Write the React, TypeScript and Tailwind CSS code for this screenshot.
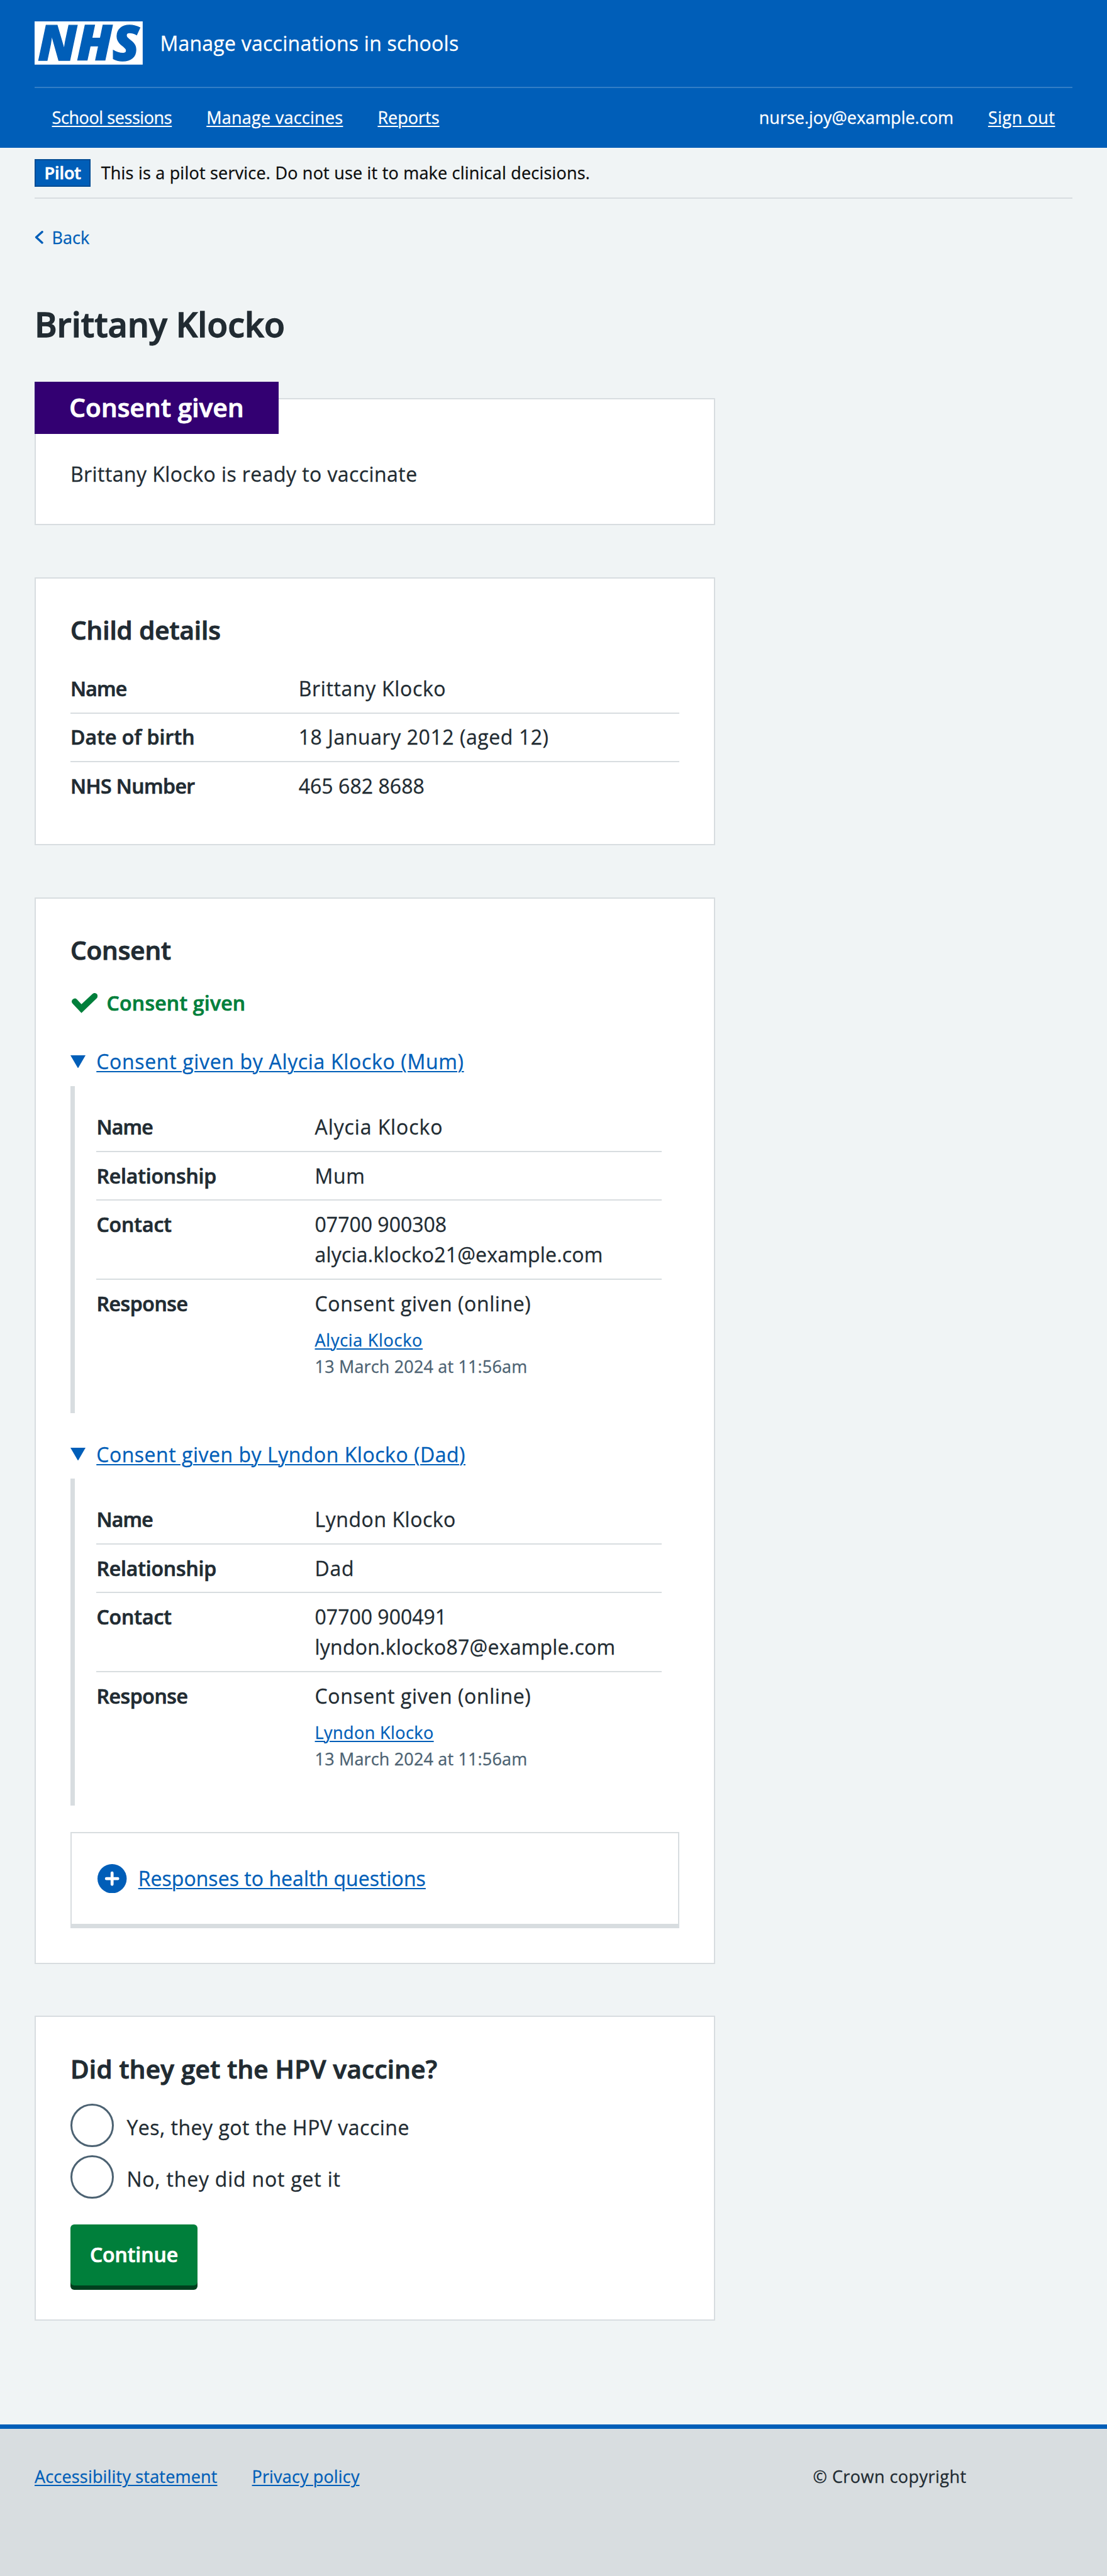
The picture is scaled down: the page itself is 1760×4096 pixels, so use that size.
import { type ReactNode } from "react";

const body = "text-[32px] leading-56";
const small = "text-[27px] leading-49";
const bold = "font-semibold [-webkit-text-stroke:0.7px]";
const heading = "text-[40.4px] leading-56 font-semibold [-webkit-text-stroke:1px]";
const link = "underline decoration-2 underline-offset-[3px]";

function T({ className = "", children }: { className?: string; children: string }) {
  return <span className={`inline-block whitespace-nowrap ${className}`}>{children}</span>;
}

interface RowProps {
  label: string;
  labelClass: string;
  keyWidth: string;
  height?: string;
  last?: boolean;
  children: ReactNode;
}

function Row({ label, labelClass, keyWidth, height = "h-90", last, children }: RowProps) {
  return (
    <div className={`flex pt-16 ${height} ${last ? "" : "border-b-2 border-[#d8dde0]"} ${body}`}>
      <dt className={`${keyWidth} shrink-0 ${bold}`}>
        <T className={labelClass}>{label}</T>
      </dt>
      <dd className="flex flex-col items-start">{children}</dd>
    </div>
  );
}

interface CardProps {
  title: string;
  titleClass: string;
  className: string;
  children: ReactNode;
}

function Card({ title, titleClass, className, children }: CardProps) {
  return (
    <section className={`mt-96 w-1259 border-2 border-[#d8dde0] bg-white px-64 pt-68 ${className}`}>
      <h2 className={heading}>
        <T className={titleClass}>{title}</T>
      </h2>
      {children}
    </section>
  );
}

interface Parent {
  summary: string;
  summaryClass: string;
  name: string;
  nameClass: string;
  respondentClass: string;
  relationship: string;
  relationshipClass: string;
  phone: string;
  email: string;
  emailClass: string;
}

const parents: Parent[] = [
  {
    summary: "Consent given by Alycia Klocko (Mum)",
    summaryClass: "tracking-[0.67px]",
    name: "Alycia Klocko",
    nameClass: "tracking-[0.89px]",
    respondentClass: "tracking-[0.72px]",
    relationship: "Mum",
    relationshipClass: "tracking-[0.63px]",
    phone: "07700 900308",
    email: "alycia.klocko21@example.com",
    emailClass: "tracking-[0.2px]",
  },
  {
    summary: "Consent given by Lyndon Klocko (Dad)",
    summaryClass: "tracking-[0.52px]",
    name: "Lyndon Klocko",
    nameClass: "tracking-[0.53px]",
    respondentClass: "tracking-[0.43px]",
    relationship: "Dad",
    relationshipClass: "tracking-[0.72px]",
    phone: "07700 900491",
    email: "lyndon.klocko87@example.com",
    emailClass: "tracking-[0.22px]",
  },
];

function ParentDetails({ parent }: { parent: Parent }) {
  return (
    <div>
      <div className={`flex h-56 items-center text-[#005eb8] ${body}`}>
        <svg viewBox="0 0 28 24" className="h-24 w-28">
          <path d="M0 0h28L14 24z" fill="#005eb8" />
        </svg>
        <T className={`mt-1 ml-20 ${link} ${parent.summaryClass}`}>{parent.summary}</T>
      </div>
      <dl className="mt-[15px] h-605 border-l-[7px] border-[#d8dde0] pt-32 pr-32 pl-40">
        <Row label="Name" labelClass="tracking-[-0.8px]" keyWidth="w-404">
          <T className={parent.nameClass}>{parent.name}</T>
        </Row>
        <Row label="Relationship" labelClass="tracking-[-0.15px]" keyWidth="w-404">
          <T className={parent.relationshipClass}>{parent.relationship}</T>
        </Row>
        <Row label="Contact" labelClass="tracking-[-0.06px]" keyWidth="w-404" height="h-146">
          <T>{parent.phone}</T>
          <T className={parent.emailClass}>{parent.email}</T>
        </Row>
        <Row label="Response" labelClass="tracking-[-0.38px]" keyWidth="w-404" height="h-205" last>
          <T className="tracking-[0.61px]">Consent given (online)</T>
          <T className={`mt-15 text-[#005eb8] ${small} ${link} ${parent.respondentClass}`}>{parent.name}</T>
          <T className={`tracking-[0.16px] text-[#4c6272] ${small}`}>13 March 2024 at 11:56am</T>
        </Row>
      </dl>
    </div>
  );
}

function Radio({ label, className }: { label: string; className: string }) {
  return (
    <label className="flex h-80 items-center">
      <span className="size-80 rounded-full border-[3.4px] border-[#4c6272]" />
      <T className={`mt-8 ml-24 ${className}`}>{label}</T>
    </label>
  );
}

export default function App() {
  return (
    <div className="flex h-[4096px] w-[1760px] flex-col overflow-hidden bg-[#f0f4f5] font-['Open_Sans',sans-serif] text-[#212b32] [--spacing:0.859375px] [-webkit-text-stroke:0.3px]">
      <header className="h-274 shrink-0 bg-[#005eb8] px-64 text-white">
        <div className="flex h-160 items-center">
          <svg viewBox="0 0 200 80" className="h-80 w-200 overflow-visible">
            <rect width="200" height="80" fill="#fff" />
            <text
              x="6"
              y="72.7"
              fontSize="91.5"
              fontWeight="800"
              fontStyle="italic"
              fill="#005eb8"
              stroke="#005eb8"
              strokeWidth="1.5"
              textLength="188"
              lengthAdjust="spacingAndGlyphs"
            >
              NHS
            </text>
          </svg>
          <T className="ml-32 text-[32px] tracking-[0.25px]">Manage vaccinations in schools</T>
        </div>
        <nav className={`flex h-114 items-center border-t-2 border-[#337ec6] px-32 ${small}`}>
          <T className={`tracking-[-0.41px] ${link}`}>School sessions</T>
          <T className={`ml-64 tracking-[0.25px] ${link}`}>Manage vaccines</T>
          <T className={`ml-64 ${link}`}>Reports</T>
          <T className="ml-auto">nurse.joy@example.com</T>
          <T className={`ml-64 tracking-[0.54px] ${link}`}>Sign out</T>
        </nav>
      </header>

      <main className="px-64">
        <div className="flex h-94 border-b-2 border-[#d8dde0] pt-20">
          <strong
            className={`flex h-52 w-104 items-center justify-center border-2 border-[#004b93] bg-[#005eb8] text-white ${bold} ${small}`}
          >
            <T className="mt-1 tracking-[-0.07px]">Pilot</T>
          </strong>
          <T className={`mt-1 ml-19 tracking-[0.21px] text-[#0b0c0c] ${small}`}>
            This is a pilot service. Do not use it to make clinical decisions.
          </T>
        </div>

        <div className={`mt-47 flex h-48 items-center text-[#005eb8] ${small}`}>
          <svg viewBox="0 0 16 24" className="h-24 w-16" fill="none">
            <path d="M14 2 3 12l11 10" stroke="#005eb8" strokeWidth="4" strokeLinecap="round" strokeLinejoin="round" />
          </svg>
          <T className="mt-2 ml-16">Back</T>
        </div>

        <h1 className="mt-101 text-[54px] leading-72 font-semibold [-webkit-text-stroke:1.3px]">
          <T className="tracking-[-0.04px]">Brittany Klocko</T>
        </h1>

        <section className="relative mt-100 h-236 w-1259 border-2 border-[#d8dde0] bg-white px-64 pt-111">
          <h2
            className={`absolute -top-32 -left-2 flex h-96 w-451 items-center bg-[#330072] px-64 text-white ${heading}`}
          >
            <T className="tracking-[0.19px]">Consent given</T>
          </h2>
          <T className={`tracking-[0.43px] ${body}`}>Brittany Klocko is ready to vaccinate</T>
        </section>

        <Card title="Child details" titleClass="tracking-[-0.04px]" className="h-496">
          <dl className="mt-36">
            <Row label="Name" labelClass="tracking-[-0.8px]" keyWidth="w-422">
              <T className="tracking-[0.66px]">Brittany Klocko</T>
            </Row>
            <Row label="Date of birth" labelClass="tracking-[0.09px]" keyWidth="w-422">
              <T className="tracking-[0.57px]">18 January 2012 (aged 12)</T>
            </Row>
            <Row label="NHS Number" labelClass="tracking-[-0.55px]" keyWidth="w-422" last>
              <T className="tracking-[0.05px]">465 682 8688</T>
            </Row>
          </dl>
        </Card>

        <Card title="Consent" titleClass="tracking-[-0.09px]" className="h-1974">
          <div className={`mt-42 flex items-center text-[#007f3b] ${bold} ${body}`}>
            <svg viewBox="0 0 48 37" className="ml-2 h-37 w-48" fill="#007f3b">
              <path d="M1.6 19.4A5.6 5.6 0 0 1 9.6 11.6L18 20.7 38.3 1.7A5.6 5.6 0 0 1 46.4 9.5L18 37z" />
            </svg>
            <T className="ml-17 tracking-[0.22px]">Consent given</T>
          </div>
          <div className="mt-52 flex flex-col gap-[41px]">
            {parents.map((parent) => (
              <ParentDetails key={parent.name} parent={parent} />
            ))}
          </div>
          <div
            className={`mt-49 flex h-178 items-center border-2 border-b-[7px] border-[#d8dde0] pl-48 text-[#005eb8] ${body}`}
          >
            <svg viewBox="0 0 54 54" className="h-54 w-54">
              <circle cx="27" cy="27" r="27" fill="#005eb8" />
              <path d="M27 16.5v21M16.5 27h21" stroke="#fff" strokeWidth="5.5" strokeLinecap="round" />
            </svg>
            <T className={`ml-21 tracking-[0.04px] ${link}`}>Responses to health questions</T>
          </div>
        </Card>

        <Card title="Did they get the HPV vaccine?" titleClass="tracking-[0.27px]" className="h-564">
          <div className={`mt-36 flex flex-col gap-16 ${body}`}>
            <Radio label="Yes, they got the HPV vaccine" className="tracking-[0.5px]" />
            <Radio label="No, they did not get it" className="tracking-[0.8px]" />
          </div>
          <button
            className={`mt-48 flex h-112 w-235 items-center justify-center rounded-[6px] bg-[#007f3b] pb-1 text-white shadow-[0_7px_0_#00401e] ${bold} ${body}`}
          >
            <T className="tracking-[-0.09px]">Continue</T>
          </button>
        </Card>
      </main>

      <footer
        className={`mt-192 flex flex-1 items-start border-t-[7px] border-[#005eb8] bg-[#d8dde0] px-64 pt-64 ${small}`}
      >
        <div className="flex w-1440 gap-64 text-[#005eb8]">
          <T className={`tracking-[0.18px] ${link}`}>Accessibility statement</T>
          <T className={`tracking-[0.15px] ${link}`}>Privacy policy</T>
        </div>
        <T className="tracking-[0.46px]">© Crown copyright</T>
      </footer>
    </div>
  );
}
